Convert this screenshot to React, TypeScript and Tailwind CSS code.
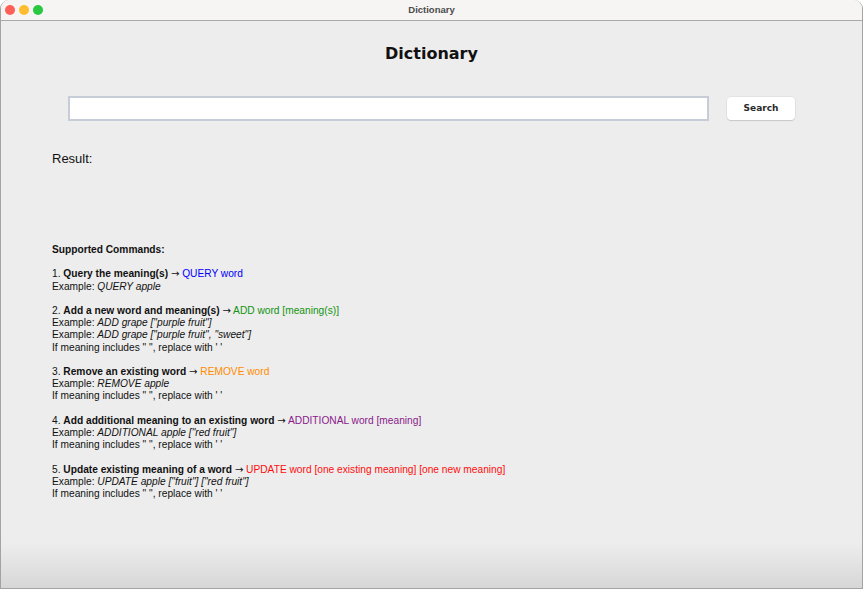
import React from 'react';

type Cmd = {
  title: string;
  syntax: string;
  color: string;
  examples: string[];
  note?: boolean;
};

const commands: Cmd[] = [
  { title: 'Query the meaning(s)', syntax: 'QUERY word', color: 'text-[#0000ff]', examples: ['QUERY apple'] },
  {
    title: 'Add a new word and meaning(s)',
    syntax: 'ADD word [meaning(s)]',
    color: 'text-[#129412]',
    examples: ['ADD grape ["purple fruit"]', 'ADD grape ["purple fruit", "sweet"]'],
    note: true,
  },
  { title: 'Remove an existing word', syntax: 'REMOVE word', color: 'text-[#ff8c00]', examples: ['REMOVE apple'], note: true },
  {
    title: 'Add additional meaning to an existing word',
    syntax: 'ADDITIONAL word [meaning]',
    color: 'text-[#8a1a8a]',
    examples: ['ADDITIONAL apple ["red fruit"]'],
    note: true,
  },
  {
    title: 'Update existing meaning of a word',
    syntax: 'UPDATE word [one existing meaning] [one new meaning]',
    color: 'text-[#ff0d0d]',
    examples: ['UPDATE apple ["fruit"] ["red fruit"]'],
    note: true,
  },
];

const App: React.FC = () => {
  return (
    <div className="w-[867px] h-[592px] bg-white overflow-hidden">
      <div className="w-[863px] h-[589px] flex flex-col rounded-t-[9px] overflow-hidden border-r border-b border-l border-[#a3a3a3] bg-[#ededed]">
        {/* Title bar */}
        <div className="relative h-[21px] shrink-0 flex items-center bg-[#f6f5f3] border-b border-[#a9a9a9]">
          <div className="flex items-center gap-[4px] pl-[4px]">
            <span className="w-[10px] h-[10px] rounded-full bg-[#fe5f57]" />
            <span className="w-[10px] h-[10px] rounded-full bg-[#febc2e]" />
            <span className="w-[10px] h-[10px] rounded-full bg-[#28c840]" />
          </div>
          <div className="absolute inset-0 flex items-center justify-center text-[9.5px] font-bold text-[#4b4b4b] font-['Liberation_Sans',Arial,sans-serif]">
            Dictionary
          </div>
        </div>

        {/* Content */}
        <div className="flex-1 flex flex-col bg-gradient-to-b from-[#ededed] from-[92%] to-[#d7d7d7]">
          <h1 className="mt-[23px] text-center text-[16px] leading-[20px] font-bold text-[#111] font-['DejaVu_Sans',sans-serif]">
            Dictionary
          </h1>

          <div className="mt-[32px] flex items-center pl-[67px]">
            <div className="w-[641px] h-[25px] bg-white border-2 border-[#c6cdd7]" />
            <button className="ml-[18px] w-[68px] h-[23px] bg-white rounded-[4px] shadow-[0_0_0_0.5px_rgba(0,0,0,0.08),0_1px_1px_rgba(0,0,0,0.12)] text-[9px] font-bold text-[#2a2a2a] font-['DejaVu_Sans',sans-serif]">
              Search
            </button>
          </div>

          <div className="mt-[30px] pl-[51px] text-[13px] leading-[16px] text-[#111] font-['Liberation_Sans',Arial,sans-serif]">
            Result:
          </div>

          <div className="mt-[77px] pl-[51px] text-[10.2px] leading-[12.2px] text-[#111] font-['Liberation_Sans',Arial,sans-serif]">
            <div className="font-bold">Supported Commands:</div>
            {commands.map((c, i) => (
              <div key={c.syntax} className="mt-[12.2px]">
                <div className="whitespace-pre">
                  {i + 1}. <span className="font-bold">{c.title}</span>{' '}
                  <span className="font-['DejaVu_Sans',sans-serif] text-[10px]">→</span>{' '}
                  <span className={c.color}>{c.syntax}</span>
                </div>
                {c.examples.map((e) => (
                  <div key={e} className="whitespace-pre">
                    Example: <span className="italic">{e}</span>
                  </div>
                ))}
                {c.note && <div className="whitespace-pre">If meaning includes " ", replace with ' '</div>}
              </div>
            ))}
          </div>
        </div>
      </div>
    </div>
  );
};

export default App;
